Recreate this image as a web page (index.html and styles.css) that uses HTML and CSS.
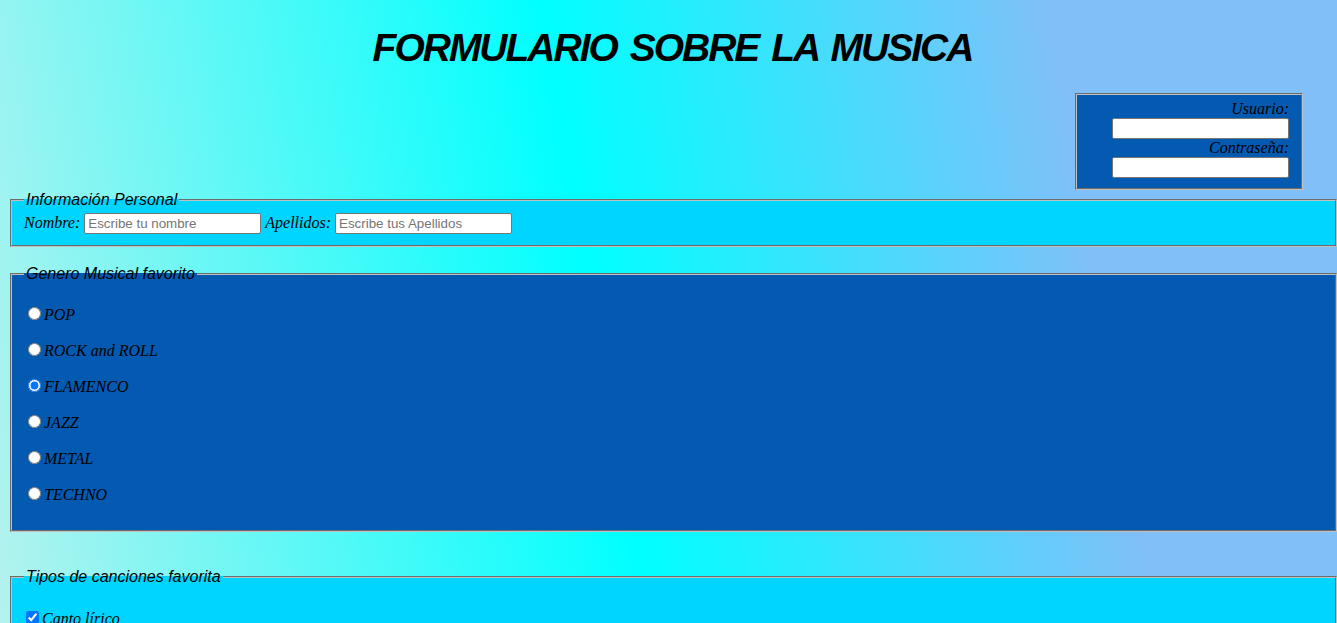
FILE: index.html
```html
<!DOCTYPE html>
<html lang="es">
<head>
<meta charset="utf-8">
<title>Formulario sobre la música</title>
<link rel="stylesheet" href="styles.css">
</head>
<body>
<h1 class="title">FORMULARIO SOBRE LA MUSICA</h1>
<div class="login-row">
  <div class="login">
    <label class="login-label" for="usuario">Usuario:</label>
    <input class="field" type="text" id="usuario">
    <label class="login-label" for="pass">Contraseña:</label>
    <input class="field" type="password" id="pass">
  </div>
</div>
<fieldset class="box box-cyan personal">
  <legend class="legend">Información Personal</legend>
  <label class="lbl" for="nombre">Nombre:</label>
  <input class="field" type="text" id="nombre" placeholder="Escribe tu nombre">
  <label class="lbl" for="apellidos">Apellidos:</label>
  <input class="field" type="text" id="apellidos" placeholder="Escribe tus Apellidos">
</fieldset>
<fieldset class="box box-blue genero">
  <legend class="legend">Genero Musical favorito</legend>
  <label class="opt"><input type="radio" name="genero" class="radio">POP</label>
  <label class="opt"><input type="radio" name="genero" class="radio">ROCK and ROLL</label>
  <label class="opt"><input type="radio" name="genero" class="radio" checked>FLAMENCO</label>
  <label class="opt"><input type="radio" name="genero" class="radio">JAZZ</label>
  <label class="opt"><input type="radio" name="genero" class="radio">METAL</label>
  <label class="opt"><input type="radio" name="genero" class="radio">TECHNO</label>
</fieldset>
<fieldset class="box box-cyan tipos">
  <legend class="legend">Tipos de canciones favorita</legend>
  <label class="opt"><input type="checkbox" class="check" checked>Canto lírico</label>
  <label class="opt"><input type="checkbox" class="check">Baladas</label>
  <label class="opt"><input type="checkbox" class="check">Instrumental</label>
</fieldset>
</body>
</html>
```

FILE: styles.css
```css
html {
  min-height: 100%;
  background: linear-gradient(80deg, #b4f2ee 0%, #00ffff 45%, #80bff8 80%, #80bff8 100%) fixed;
}

body {
  margin: 8px 0 0 8px;
  font-family: "Liberation Serif", "Times New Roman", serif;
  font-size: 16px;
  color: #000;
}

.title {
  margin: 17px 0 22px;
  text-align: center;
  font-family: "Liberation Sans", Arial, sans-serif;
  font-size: 39px;
  font-weight: bold;
  font-style: italic;
  letter-spacing: -2px;
  word-spacing: 4px;
  line-height: 46px;
}

.login-row {
  display: flex;
  justify-content: flex-end;
  padding-right: 34px;
}

.login {
  display: flex;
  flex-direction: column;
  align-items: flex-end;
  width: 200px;
  padding: 5px 12px 10px;
  border: 2px groove #c0c0c0;
  background: #0459b1;
}

.login-label {
  font-style: italic;
  line-height: 18px;
}

.field {
  box-sizing: border-box;
  width: 177px;
  height: 21px;
  margin: 0;
  padding: 1px 3px;
  border: 1px solid #767676;
  border-radius: 2px;
  background: #fff;
  font-family: "Liberation Sans", Arial, sans-serif;
  font-size: 13.333px;
  vertical-align: baseline;
}

.field::placeholder {
  color: #757575;
}

.box {
  margin: 0 0 0 2px;
  border: 2px groove #c0c0c0;
  min-width: 0;
}

.box-cyan {
  background: #00d5ff;
}

.box-blue {
  background: #0459b1;
}

.legend {
  font-family: "Liberation Sans", Arial, sans-serif;
  font-style: italic;
  font-size: 16px;
  padding: 0 2px;
}

.lbl {
  font-style: italic;
}

.personal {
  margin-top: 1px;
  padding-top: 4px;
  padding-bottom: 11px;
}

.genero {
  margin-top: 18px;
  padding: 21px 12px 26px;
  display: flex;
  flex-direction: column;
  gap: 16px;
}

.tipos {
  margin-top: 36px;
  padding: 22px 12px 25px;
  display: flex;
  flex-direction: column;
  gap: 16px;
}

.opt {
  display: block;
  height: 20px;
  font-style: italic;
  line-height: 20px;
}

.radio {
  margin: 3px 3px 0 4px;
}

.check {
  margin: 3px 3px 3px 2px;
}
```
